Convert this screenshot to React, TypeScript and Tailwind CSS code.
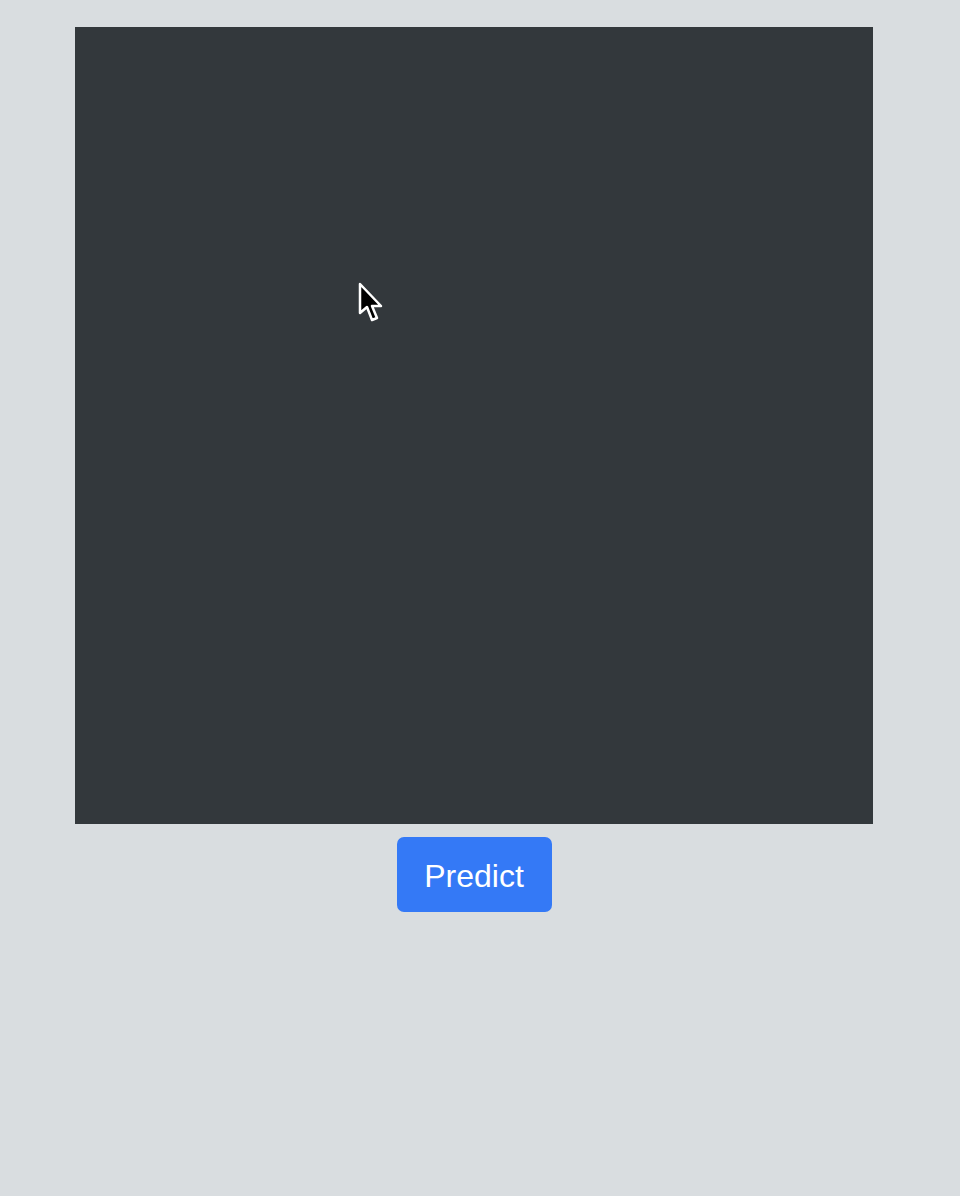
export default function App() {
  return (
    <div className="min-h-[1196px] w-full bg-[#d9dde0] pt-[27px]" style={{ fontFamily: '"Liberation Sans", Arial, sans-serif' }}>
      <div className="ml-[75px] flex w-[798px] flex-col items-center">
        {/* Drawing canvas */}
        <div className="relative h-[797px] w-[798px] bg-[#33383c]">
          <svg
            className="absolute left-[282px] top-[255px]"
            width="28"
            height="42"
            viewBox="0 0 28 42"
          >
            <path
              d="M3 2 L3 31 L10 25 L15 38 L20 36 L15 24 L24 24 Z"
              fill="#000"
              stroke="#fff"
              strokeWidth="2.5"
              strokeLinejoin="round"
            />
          </svg>
        </div>

        {/* Predict button */}
        <button className="mt-[13px] h-[75px] w-[155px] rounded-[7px] bg-[#3479f6] pt-[3px] text-[32px] leading-none text-white">
          Predict
        </button>
      </div>
    </div>
  );
}
